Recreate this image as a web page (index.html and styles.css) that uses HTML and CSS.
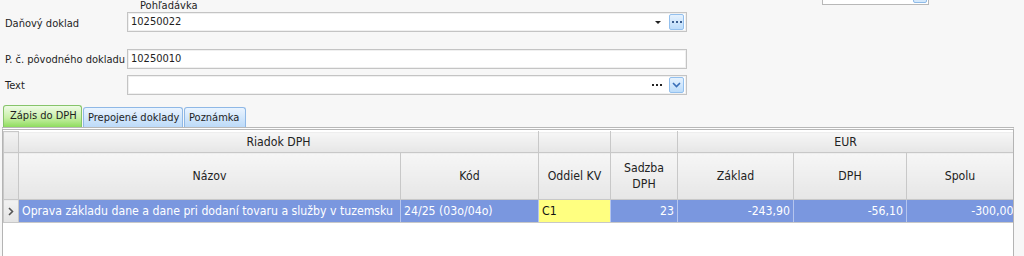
FILE: index.html
```html
<!DOCTYPE html>
<html lang="sk">
<head>
<meta charset="utf-8">
<link rel="stylesheet" href="styles.css">
</head>
<body>
<div class="page">
  <div class="toprow">
    <div class="caption">Pohľadávka</div>
    <div class="corner-box"><span class="corner-btn"></span></div>
  </div>
  <div class="field f1">
    <label class="lbl">Daňový doklad</label>
    <div class="input">
      <span class="val">10250022</span>
      <span class="caret"></span>
      <span class="btn dots-btn"><i></i><i></i><i></i></span>
    </div>
  </div>
  <div class="field f2">
    <label class="lbl">P. č. pôvodného dokladu</label>
    <div class="input"><span class="val">10250010</span></div>
  </div>
  <div class="field f3">
    <label class="lbl">Text</label>
    <div class="input">
      <span class="val"></span>
      <span class="dots"><i></i><i></i><i></i></span>
      <span class="btn chev-btn"><svg width="9" height="6" viewBox="0 0 9 6"><path d="M1 1 L4.5 4.5 L8 1" fill="none" stroke="#3a6fb8" stroke-width="1.6"/></svg></span>
    </div>
  </div>
  <div class="tabs">
    <div class="tab active">Zápis do DPH</div>
    <div class="tab">Prepojené doklady</div>
    <div class="tab">Poznámka</div>
  </div>
  <div class="grid">
    <table>
      <colgroup>
        <col class="c-ind"><col class="c-naz"><col class="c-kod"><col class="c-odd"><col class="c-sad"><col class="c-zak"><col class="c-dph"><col class="c-spo">
      </colgroup>
      <thead>
        <tr class="h1">
          <th class="ind"></th>
          <th colspan="2">Riadok DPH</th>
          <th></th>
          <th></th>
          <th colspan="3">EUR</th>
        </tr>
        <tr class="h2">
          <th class="ind"></th>
          <th>Názov</th>
          <th>Kód</th>
          <th>Oddiel KV</th>
          <th>Sadzba<br>DPH</th>
          <th>Základ</th>
          <th>DPH</th>
          <th>Spolu</th>
        </tr>
      </thead>
      <tbody>
        <tr class="sel">
          <td class="ind"><svg width="6" height="9" viewBox="0 0 6 9"><path d="M1 1 L4.5 4.5 L1 8" fill="none" stroke="#555" stroke-width="1.6"/></svg></td>
          <td>Oprava základu dane a dane pri dodaní tovaru a služby v tuzemsku</td>
          <td>24/25 (03o/04o)</td>
          <td class="yel">C1</td>
          <td class="num">23</td>
          <td class="num">-243,90</td>
          <td class="num">-56,10</td>
          <td class="num last">-300,00</td>
        </tr>
      </tbody>
    </table>
  </div>
</div>
</body>
</html>
```
FILE: styles.css
```css
* { box-sizing: border-box; }
html, body { margin: 0; padding: 0; }
body {
  background: #f7f7f7;
  font-family: "DejaVu Sans Condensed", "DejaVu Sans", sans-serif;
  font-stretch: condensed;
  font-size: 11px;
  color: #1e1e1e;
  width: 1024px;
  height: 256px;
  overflow: hidden;
}
.page { display: flex; flex-direction: column; }
.toprow {
  height: 12px;
  display: flex;
  align-items: flex-start;
}
.caption {
  margin-left: 140px;
  margin-top: 0;
  line-height: 11px;
}
.corner-box {
  margin-left: auto;
  margin-right: 95px;
  width: 107px;
  height: 5px;
  border: 1px solid #b8b8b8;
  border-top: none;
  background: #fff;
  position: relative;
}
.corner-btn {
  position: absolute;
  right: 1px;
  top: -6px;
  width: 14px;
  height: 9px;
  border: 1px solid #8fbbe8;
  border-radius: 2px;
  background: #d4e8fb;
}
.field {
  display: flex;
  align-items: center;
  height: 20px;
}
.f2 { margin-top: 17px; }
.f3 { margin-top: 6px; }
.lbl {
  width: 127px;
  padding-left: 5px;
  white-space: nowrap;
}
.f1 .lbl { padding-top: 2px; }
.input {
  width: 560px;
  height: 20px;
  background: #fff;
  border: 1px solid #c4c4c4;
  box-shadow: inset 0 0 0 1px #f0f0f0;
  display: flex;
  align-items: center;
  padding-left: 3px;
  padding-right: 2px;
}
.val { flex: 1; line-height: 16px; }
.caret {
  width: 0; height: 0;
  border-left: 3px solid transparent;
  border-right: 3px solid transparent;
  border-top: 3px solid #222;
  margin-right: 8px;
  margin-top: 1px;
}
.btn {
  width: 15px;
  height: 16px;
  border: 1px solid #93c0ee;
  border-radius: 2px;
  background: linear-gradient(#e6f2fe, #bcdcfa);
  display: flex;
  align-items: center;
  justify-content: center;
  gap: 2px;
}
.dots-btn i {
  width: 2px; height: 2px; background: #3a5e90; display: block;
}
.dots { display: flex; gap: 2px; margin-right: 7px; }
.dots i { width: 2px; height: 2px; background: #222; display: block; }
.tabs {
  margin-top: 10px;
  height: 22px;
  display: flex;
  align-items: flex-end;
  padding-left: 3px;
  gap: 1px;
}
.tab {
  height: 20px;
  border: 1px solid #8fb8e6;
  border-bottom: none;
  border-radius: 3px 3px 0 0;
  background: linear-gradient(#eaf4ff, #bcdaf8);
  line-height: 19px;
  white-space: nowrap;
}
.tab:nth-child(2) { width: 100px; padding-left: 4px; }
.tab:nth-child(3) { width: 62px; padding-left: 4px; }
.tab.active {
  width: 79px;
  height: 22px;
  padding-left: 6px;
  border-color: #86c46a;
  background: linear-gradient(#eefbe6 0%, #c9f0a8 55%, #8fdc5e 100%);
  line-height: 20px;
}
.grid {
  margin-left: 2px;
  width: 1012px;
  height: 130px;
  border: 1px solid #b4b4b4;
  border-top: 3px double #b8b8b8;
  background: #fff;
  padding: 1px 0 0 0;
  overflow: hidden;
  font-size: 12.2px;
}
table {
  border-collapse: collapse;
  table-layout: fixed;
  width: 1010px;
}
col.c-ind { width: 15px; }
col.c-naz { width: 382px; }
col.c-kod { width: 138px; }
col.c-odd { width: 72px; }
col.c-sad { width: 67px; }
col.c-zak { width: 116px; }
col.c-dph { width: 113px; }
col.c-spo { width: 107px; }
th {
  font-weight: normal;
  background: linear-gradient(#f6f6f6, #e6e6e6);
  border: 1px solid #c8c8c8;
  border-top-color: #fff;
  border-left-color: #fff;
  padding: 0;
  text-align: center;
  color: #222;
  line-height: 16px;
}
tr.h1 th { height: 21px; }
tr.h2 th { height: 47px; }
th.ind, td.ind {
  background: linear-gradient(#f2f2f2, #e4e4e4);
  border: 1px solid #c8c8c8;
}
td {
  height: 23px;
  padding: 0 3px;
  background: #7a97df;
  color: #fff;
  white-space: nowrap;
  overflow: hidden;
  border-right: 1px solid #b5c5ee;
  border-bottom: 1px solid #c8c8c8;
  line-height: 16px;
}
td.ind { padding: 0 0 0 4px; }
td.ind svg { display: block; }
td.yel { background: #ffff80; color: #111; }
td.num { text-align: right; }
td.last { text-overflow: clip; padding-right: 0; border-right: none; }
```
